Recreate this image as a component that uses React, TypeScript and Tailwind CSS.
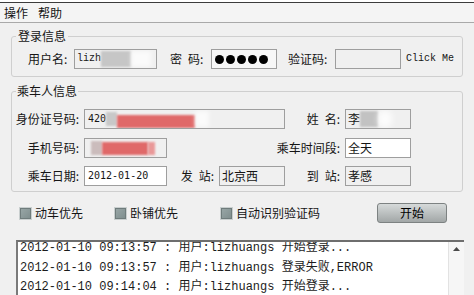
import React from 'react';

const mono = "font-['Liberation_Mono','Noto_Sans_CJK_SC',monospace]";

const Box: React.FC<{ className?: string; children?: React.ReactNode }> = ({ className = '', children }) => (
  <div
    className={`h-[20px] shrink-0 border border-[#9e9e9e] flex items-center pl-[2px] overflow-hidden whitespace-nowrap ${className}`}
  >
    {children}
  </div>
);

const Label: React.FC<{ className?: string; children: React.ReactNode }> = ({ className = '', children }) => (
  <div className={`shrink-0 flex justify-end items-center pr-[5px] whitespace-nowrap ${className}`}>{children}</div>
);

const Check: React.FC<{ label: string; className?: string }> = ({ label, className = '' }) => (
  <div className={`flex items-center ${className}`}>
    <span className="w-[13px] h-[13px] border border-[#c9cfcf] bg-gradient-to-br from-[#9aa8a8] to-[#7d8c8c] shadow-[inset_0_0_0_1px_#6f7c7c]" />
    <span className="ml-[3px]">{label}</span>
  </div>
);

const logs = [
  '2012-01-10 09:13:57 : 用户:lizhuangs 开始登录...',
  '2012-01-10 09:13:57 : 用户:lizhuangs 登录失败,ERROR',
  '2012-01-10 09:14:04 : 用户:lizhuangs 开始登录...',
];

export default function App() {
  return (
    <div className="w-[474px] h-[295px] overflow-hidden bg-[#f0f0f0] text-[12px] leading-[14px] text-[#151515] font-['Noto_Sans_CJK_SC',sans-serif]">
      <div className="h-[2px] bg-white" />
      <div className="h-[1px] bg-[#3c3c3c]" />
      {/* menu */}
      <div className="h-[20px] bg-[#f4f4f4] border-b border-[#a9a9a9] flex items-center gap-[10px] pl-[4px]">
        <span>操作</span>
        <span>帮助</span>
      </div>

      {/* 登录信息 */}
      <fieldset className="mx-[11px] mt-[6px] border border-[#cfcfcf] rounded-[3px] pb-[7px]">
        <legend className="ml-[4px] px-[2px] leading-[14px]">登录信息</legend>
        <div className="mt-[6px] flex items-center pl-[16px]">
          <Label className="w-[46px] justify-start">用户名:</Label>
          <Box className="w-[83px] bg-[#f0f0f0]">
            <span className={`${mono} text-[10px]`}>lizh</span>
            <span className="w-[30px] h-[16px] bg-[#c6c6c6] blur-[1px]" />
            <span className="w-[20px] h-[16px] bg-white/70 blur-[2px]" />
          </Box>
          <Label className="ml-[13px] w-[41px] justify-start">密&ensp;码:</Label>
          <Box className="w-[66px] bg-[#f7f7f7] gap-[2px] pl-[3px]">
            {[0, 1, 2, 3, 4].map((i) => (
              <span key={i} className="w-[9px] h-[9px] rounded-full bg-black" />
            ))}
          </Box>
          <Label className="ml-[11px] w-[47px] justify-start">验证码:</Label>
          <Box className="w-[66px] bg-[#f0f0f0]" />
          <span className={`${mono} text-[10px] ml-[5px]`}>Click Me</span>
        </div>
      </fieldset>

      {/* 乘车人信息 */}
      <fieldset className="mx-[11px] mt-[7px] border border-[#cfcfcf] rounded-[3px] pb-[5px]">
        <legend className="ml-[4px] px-[1px] leading-[14px]">乘车人信息</legend>

        <div className="mt-[11px] flex items-center">
          <Label className="w-[72px]">身份证号码:</Label>
          <Box className="w-[201px] bg-[#f0f0f0]">
            <span className="font-['DejaVu_Sans_Mono',monospace] text-[10px] ml-[1px]">420</span>
            <span className="w-[11px] h-[14px] bg-[#c8c8c8] blur-[1px]" />
            <span className="w-[78px] h-[13px] mt-[5px] bg-[#e06969] blur-[1px]" />
            <span className="w-[14px] h-[16px] bg-white/70 blur-[2px]" />
          </Box>
          <Label className="w-[60px]">姓&ensp;名:</Label>
          <Box className="w-[66px] bg-[#f0f0f0]">
            <span>李</span>
            <span className="w-[18px] h-[16px] bg-[#c2c2c2] blur-[1px]" />
            <span className="w-[14px] h-[18px] rounded-full bg-white/80 blur-[3px]" />
          </Box>
        </div>

        <div className="mt-[9px] flex items-center">
          <Label className="w-[72px]">手机号码:</Label>
          <Box className="w-[83px] bg-[#f0f0f0] pl-[6px]">
            <span className="w-[11px] h-[14px] bg-[#cbbcbc] blur-[1px]" />
            <span className="w-[46px] h-[13px] bg-[#e06969] blur-[1px]" />
            <span className="w-[7px] h-[13px] bg-[#e99898] blur-[1px]" />
          </Box>
          <div className="w-[118px] shrink-0" />
          <Label className="w-[60px]">乘车时间段:</Label>
          <Box className="w-[66px] bg-white">全天</Box>
        </div>

        <div className="mt-[8px] flex items-center">
          <Label className="w-[72px]">乘车日期:</Label>
          <Box className="w-[83px] bg-white">
            <span className="font-['DejaVu_Sans_Mono',monospace] text-[10px] ml-[1px]">2012-01-20</span>
          </Box>
          <Label className="ml-[12px] w-[40px]">发&ensp;站:</Label>
          <Box className="w-[66px] bg-[#f0f0f0]">北京西</Box>
          <Label className="w-[60px]">到&ensp;站:</Label>
          <Box className="w-[66px] bg-[#f0f0f0]">孝感</Box>
        </div>
      </fieldset>

      {/* options */}
      <div className="mt-[11px] h-[20px] flex items-center pl-[19px] pr-[27px]">
        <Check label="动车优先" />
        <Check label="卧铺优先" className="ml-[31px]" />
        <Check label="自动识别验证码" className="ml-[42px]" />
        <button className="ml-auto w-[70px] h-[20px] rounded-[3px] border border-[#7d8282] bg-gradient-to-b from-[#d6dada] to-[#a2a7a7] text-[12px] leading-none text-black">
          开始
        </button>
      </div>

      {/* log */}
      <div className="mt-[17px] ml-[16px] mr-[10px] h-[60px] flex border-t-2 border-l-2 border-t-[#6e6e6e] border-l-[#7a7a7a] bg-white overflow-hidden">
        <div className={`flex-1 pl-[2px] -mt-[3px] ${mono} text-[12px] leading-[19.7px] text-[#1c1c1c] whitespace-nowrap overflow-hidden`}>
          {logs.map((l) => (
            <div key={l}>{l}</div>
          ))}
        </div>
        <div className="w-[16px] shrink-0 border-l border-[#e2e2e2] bg-[#f6f6f6] flex justify-center pt-[5px]">
          <svg width="7" height="4" viewBox="0 0 7 4">
            <path d="M0 4 L3.5 0 L7 4 Z" fill="#4a4a4a" />
          </svg>
        </div>
      </div>
    </div>
  );
}
